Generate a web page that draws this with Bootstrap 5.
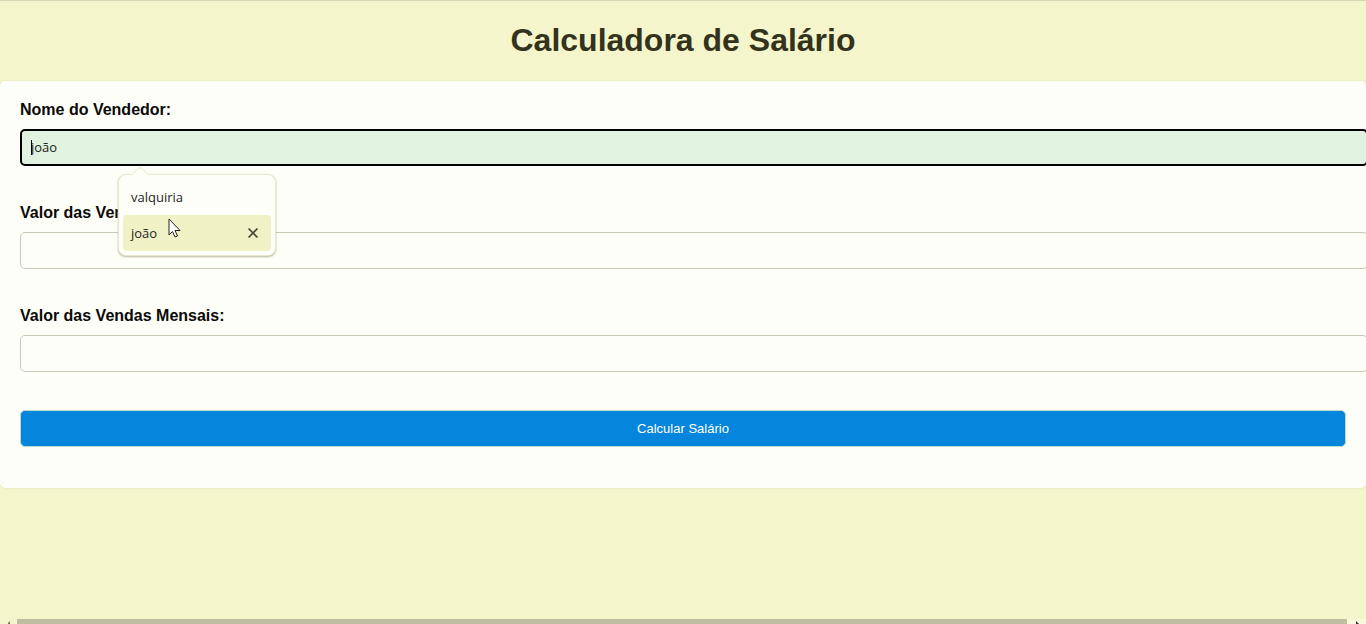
<!DOCTYPE html>
<html lang="pt-BR">
<head>
<meta charset="utf-8">
<meta name="viewport" content="width=device-width, initial-scale=1">
<title>Calculadora de Salário</title>
<link href="https://cdn.jsdelivr.net/npm/bootstrap@5.3.0/dist/css/bootstrap.min.css" rel="stylesheet">
<style>
  body { background: #f5f5cc; color: #0a0a08; font: 16px/18px "Liberation Sans", Arial, sans-serif; }
  .page-head { border-top: 1px solid #d6d6b4; padding: 20px 20px 22px; }
  .page-head h1 { color: #33331c; font-size: 32px; line-height: 38px; font-weight: 700; }
  .calc-form { background: #fefef8; border-radius: 5px; padding: 20px 20px 41px; box-shadow: 0 0 2px #d8d8b8; }
  .field { margin-bottom: 38px; }
  .form-label { font-weight: 700; margin-bottom: 10px; display: block; line-height: 18px; }
  .form-control { box-sizing: content-box; height: 15px; line-height: 15px; padding: 10px; min-height: 0; font-size: 13px; font-family: "Open Sans", "Noto Sans", sans-serif; border: 1px solid #c8c8b4; border-radius: 5px; background: transparent; color: #1c1c16; }
  .form-control.filled { background: #e1f2e0; border: 2px solid #000; padding: 9px; }
  .caret { position: absolute; left: 11px; top: 11px; width: 1px; height: 15px; background: #000; }
  .btn-calc { font-size: 13px; line-height: 15px; padding: 10px; border-radius: 5px; color: #fff; background: #0585db; border: 1px solid #b9dcd0; }
  .btn-calc:hover { background: #0779c4; color: #fff; }
  .suggest { position: absolute; left: 98px; top: 45px; width: 158px; padding: 4px; background: #fefef8; border: 1px solid #e8e8d0; border-radius: 8px; box-shadow: 0 1px 2px #b8b8a0; z-index: 3; font: 13px/18px "Open Sans", "Noto Sans", sans-serif; }
  .suggest .tip { position: absolute; left: 12px; top: -8px; }
  .suggest button { border: 0; background: none; color: #24241e; padding: 9px 8px; border-radius: 4px; text-align: left; }
  .suggest button.active { background: #f1f1c6; }
  .suggest .pointer { position: absolute; left: 49px; top: 43px; }
  .scroll-strip { height: 5px; }
  .scroll-strip .thumb { background: #bebea2; margin: 0 19px 0 17px; }
</style>
</head>
<body class="d-flex flex-column min-vh-100 overflow-hidden">
<header class="page-head text-center"><h1 class="m-0">Calculadora de Salário</h1></header>
<main>
  <form class="calc-form">
    <div class="field">
      <label class="form-label" for="nome">Nome do Vendedor:</label>
      <div class="position-relative">
        <input class="form-control filled" id="nome" type="text" value="joão" autocomplete="off">
        <span class="caret"></span>
        <div class="suggest d-flex flex-column">
          <svg class="tip" width="18" height="9" viewBox="0 0 18 9" aria-hidden="true"><path d="M0 8.5 7 1.5Q9 0 11 1.5L18 8.5" fill="#fefef8" stroke="#e6e6ce"/></svg>
          <button type="button">valquiria</button>
          <button type="button" class="active d-flex justify-content-between align-items-center">joão
            <svg width="20" height="10" viewBox="0 0 20 10" aria-hidden="true"><path d="M5.500.5 14.500 9.500M14.500.5 5.500 9.500" fill="none" stroke="#484836" stroke-width="1.600"/></svg>
          </button>
          <svg class="pointer" width="13" height="20" viewBox="0 0 13 20" aria-hidden="true"><path d="M1 1V17L4.500 13.500 7 19 9.500 18 7 12.500H12Z" fill="#fff" stroke="#222"/></svg>
        </div>
      </div>
    </div>
    <div class="field">
      <label class="form-label" for="fixo">Valor das Vendas:</label>
      <input class="form-control" id="fixo" type="text">
    </div>
    <div class="field">
      <label class="form-label" for="mensal">Valor das Vendas Mensais:</label>
      <input class="form-control" id="mensal" type="text">
    </div>
    <button class="btn btn-calc d-block w-100" type="button">Calcular Salário</button>
  </form>
</main>
<div class="scroll-strip d-flex mt-auto position-relative" aria-hidden="true">
  <div class="thumb flex-grow-1"></div>
  <svg class="position-absolute start-0 top-0" width="17" height="5"><path d="M8 5V4L10 2V5Z" fill="#77776a"/></svg>
  <svg class="position-absolute end-0 top-0" width="19" height="5"><path d="M0 0H19V5H0Z" fill="#f8f8dc"/><path d="M9 5V2L12 5Z" fill="#333"/></svg>
</div>
<script src="https://cdn.jsdelivr.net/npm/bootstrap@5.3.0/dist/js/bootstrap.bundle.min.js"></script>
</body>
</html>
